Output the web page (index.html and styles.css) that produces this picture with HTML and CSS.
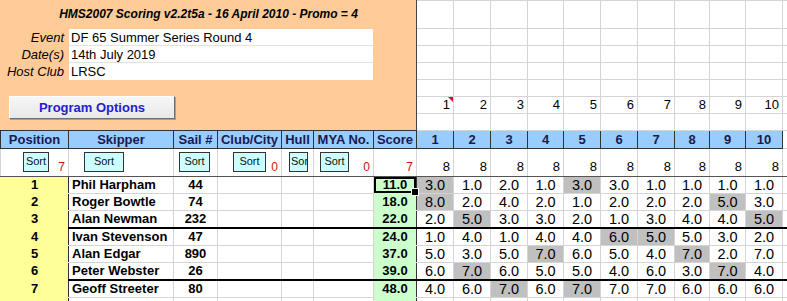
FILE: index.html
```html
<!DOCTYPE html>
<html lang="en">

<head>
  <meta charset="UTF-8">
  <meta name="viewport" content="width=device-width, initial-scale=1.0">
  <title>HMS2007 Scoring</title>
  <link rel="stylesheet" href="styles.css">
</head>

<body>
  <table class="sheet">
    <colgroup>
      <col class="col-pos">
      <col class="col-skipper">
      <col class="col-sail">
      <col class="col-club">
      <col class="col-hull">
      <col class="col-mya">
      <col class="col-score">
      <col class="col-race">
      <col class="col-race">
      <col class="col-race">
      <col class="col-race w36">
      <col class="col-race">
      <col class="col-race">
      <col class="col-race">
      <col class="col-race w35">
      <col class="col-race w36">
      <col class="col-race">
      <col class="col-race">
    </colgroup>

    <tr class="tall">
      <td class="panel" colspan="7" rowspan="7">
        <div class="panel-inner">
          <div class="title">HMS2007 Scoring v2.2t5a - 16 April 2010 - Promo = 4</div>
          <div class="event-info">
            <span class="label">Event</span>
            <span class="value">DF 65 Summer Series Round 4</span>
            <span class="label">Date(s)</span>
            <span class="value">14th July 2019</span>
            <span class="label">Host Club</span>
            <span class="value last">LRSC</span>
          </div>
          <button type="button" class="options-btn">Program Options</button>
        </div>
      </td>
      <td></td><td></td><td></td><td></td><td></td><td></td><td></td><td></td><td></td><td></td><td></td>
    </tr>
    <tr><td></td><td></td><td></td><td></td><td></td><td></td><td></td><td></td><td></td><td></td><td></td></tr>
    <tr><td></td><td></td><td></td><td></td><td></td><td></td><td></td><td></td><td></td><td></td><td></td></tr>
    <tr><td></td><td></td><td></td><td></td><td></td><td></td><td></td><td></td><td></td><td></td><td></td></tr>
    <tr><td></td><td></td><td></td><td></td><td></td><td></td><td></td><td></td><td></td><td></td><td></td></tr>
    <tr class="race-nos">
      <td class="note">1</td><td>2</td><td>3</td><td>4</td><td>5</td><td>6</td><td>7</td><td>8</td><td>9</td><td>10</td><td></td>
    </tr>
    <tr><td></td><td></td><td></td><td></td><td></td><td></td><td></td><td></td><td></td><td></td><td></td></tr>

    <tr class="head">
      <th>Position</th>
      <th>Skipper</th>
      <th>Sail #</th>
      <th>Club/City</th>
      <th>Hull</th>
      <th>MYA No.</th>
      <th class="score-head">Score</th>
      <th>1</th><th>2</th><th>3</th><th>4</th><th>5</th><th>6</th><th>7</th><th>8</th><th>9</th><th>10</th>
      <td></td>
    </tr>

    <tr class="sort-row">
      <td><div class="sort-wrap"><button type="button" class="sort-btn s-pos">Sort</button><span class="count">7</span></div></td>
      <td><div class="sort-wrap"><button type="button" class="sort-btn s-skipper">Sort</button></div></td>
      <td><div class="sort-wrap"><button type="button" class="sort-btn s-sail">Sort</button></div></td>
      <td><div class="sort-wrap"><button type="button" class="sort-btn s-club">Sort</button><span class="count">0</span></div></td>
      <td><div class="sort-wrap"><button type="button" class="sort-btn s-hull">Sor</button></div></td>
      <td><div class="sort-wrap"><button type="button" class="sort-btn s-mya">Sort</button><span class="count">0</span></div></td>
      <td><div class="sort-wrap"><span class="count">7</span></div></td>
      <td class="total">8</td><td class="total">8</td><td class="total">8</td><td class="total">8</td><td class="total">8</td>
      <td class="total">8</td><td class="total">8</td><td class="total">8</td><td class="total">8</td><td class="total">8</td>
      <td></td>
    </tr>

    <tr class="result">
      <td class="pos">1</td><td class="skipper">Phil Harpham</td><td class="sail">44</td><td></td><td></td><td></td>
      <td class="score active">11.0</td>
      <td class="drop">3.0</td><td>1.0</td><td>2.0</td><td>1.0</td><td class="drop">3.0</td>
      <td>3.0</td><td>1.0</td><td>1.0</td><td>1.0</td><td>1.0</td><td></td>
    </tr>
    <tr class="result">
      <td class="pos">2</td><td class="skipper">Roger Bowtle</td><td class="sail">74</td><td></td><td></td><td></td>
      <td class="score">18.0</td>
      <td class="drop">8.0</td><td>2.0</td><td>4.0</td><td>2.0</td><td>1.0</td>
      <td>2.0</td><td>2.0</td><td>2.0</td><td class="drop">5.0</td><td>3.0</td><td></td>
    </tr>
    <tr class="result">
      <td class="pos">3</td><td class="skipper">Alan Newman</td><td class="sail">232</td><td></td><td></td><td></td>
      <td class="score">22.0</td>
      <td>2.0</td><td class="drop">5.0</td><td>3.0</td><td>3.0</td><td>2.0</td>
      <td>1.0</td><td>3.0</td><td>4.0</td><td>4.0</td><td class="drop">5.0</td><td></td>
    </tr>
    <tr class="result split">
      <td class="pos">4</td><td class="skipper">Ivan Stevenson</td><td class="sail">47</td><td></td><td></td><td></td>
      <td class="score">24.0</td>
      <td>1.0</td><td>4.0</td><td>1.0</td><td>4.0</td><td>4.0</td>
      <td class="drop">6.0</td><td class="drop">5.0</td><td>5.0</td><td>3.0</td><td>2.0</td><td></td>
    </tr>
    <tr class="result">
      <td class="pos">5</td><td class="skipper">Alan Edgar</td><td class="sail">890</td><td></td><td></td><td></td>
      <td class="score">37.0</td>
      <td>5.0</td><td>3.0</td><td>5.0</td><td class="drop">7.0</td><td>6.0</td>
      <td>5.0</td><td>4.0</td><td class="drop">7.0</td><td>2.0</td><td>7.0</td><td></td>
    </tr>
    <tr class="result">
      <td class="pos">6</td><td class="skipper">Peter Webster</td><td class="sail">26</td><td></td><td></td><td></td>
      <td class="score">39.0</td>
      <td>6.0</td><td class="drop">7.0</td><td>6.0</td><td>5.0</td><td>5.0</td>
      <td>4.0</td><td>6.0</td><td>3.0</td><td class="drop">7.0</td><td>4.0</td><td></td>
    </tr>
    <tr class="result split">
      <td class="pos">7</td><td class="skipper">Geoff Streeter</td><td class="sail">80</td><td></td><td></td><td></td>
      <td class="score">48.0</td>
      <td>4.0</td><td>6.0</td><td class="drop">7.0</td><td>6.0</td><td class="drop">7.0</td>
      <td>7.0</td><td>7.0</td><td>6.0</td><td>6.0</td><td>6.0</td><td></td>
    </tr>
    <tr class="result">
      <td class="pos"></td><td class="skipper"></td><td class="sail"></td><td></td><td></td><td></td>
      <td class="score"></td>
      <td></td><td></td><td></td><td></td><td></td><td></td><td></td><td></td><td></td><td></td><td></td>
    </tr>
  </table>
</body>

</html>
```

FILE: styles.css
```css
* {
  box-sizing: border-box;
  margin: 0;
  padding: 0;
}

body {
  overflow: hidden;
  background: #FFF;
}

.sheet {
  width: 819px;
  table-layout: fixed;
  border-collapse: collapse;
  font-family: "Liberation Sans", Arial, sans-serif;
  font-size: 13px;
  color: #000;
}

.col-pos { width: 68px; }
.col-skipper { width: 105px; }
.col-sail { width: 44px; }
.col-club { width: 64px; }
.col-hull { width: 32px; }
.col-mya { width: 60px; }
.col-score { width: 43px; }
.col-race { width: 37px; }
.col-race.w36 { width: 36px; }
.col-race.w35 { width: 35px; }

.sheet td,
.sheet th {
  height: 17px;
  padding: 0 2px;
  border: 1px solid #D4D4D4;
  line-height: 16px;
  text-align: center;
  white-space: nowrap;
  overflow: hidden;
}

.sheet tr.tall > td {
  height: 28px;
}

/* orange header block */
.sheet td.panel {
  padding: 0;
  vertical-align: top;
  background: #FFCC99;
  border: 1px solid #FFCC99;
  border-right-color: #444;
  border-bottom-color: #333;
}

.panel-inner {
  display: flex;
  flex-direction: column;
  height: 129px;
}

.title {
  height: 28px;
  line-height: 27px;
  text-align: center;
  font-size: 12px;
  font-weight: bold;
  font-style: italic;
}

.event-info {
  display: grid;
  grid-template-columns: 68px 304px;
  grid-auto-rows: 17px;
}

.event-info .label {
  padding-right: 5px;
  text-align: right;
  font-style: italic;
  line-height: 17px;
}

.event-info .value {
  padding-left: 2px;
  background: #FFF;
  border-bottom: 1px solid #E2E2E2;
  line-height: 17px;
  text-align: left;
}

.event-info .value.last {
  border-bottom: 0;
}

.options-btn {
  width: 166px;
  height: 23px;
  margin: 16px 0 0 8px;
  border: 1px solid;
  border-color: #FFF #707070 #707070 #FFF;
  box-shadow: 1px 1px 0 #A0A0A0;
  background: linear-gradient(#F6F6F6, #E8E8E8);
  color: #2222CC;
  font-family: "Liberation Sans", Arial, sans-serif;
  font-size: 13px;
  font-weight: bold;
}

.race-nos td {
  text-align: right;
  padding-right: 3px;
}

.sheet td.note {
  position: relative;
}

.sheet td.note::after {
  content: '';
  position: absolute;
  top: 0;
  right: 0;
  border-left: 5px solid transparent;
  border-top: 5px solid #D0102A;
}

/* column heading row */
.head th {
  height: 18px;
  background: #99CCFF;
  border-color: #333;
  color: #1A1A4E;
  font-weight: bold;
}

.head td {
  border-top-color: #333;
}

/* sort buttons row */
.sort-row td {
  height: 28px;
  padding: 0 3px 0 0;
  vertical-align: bottom;
  border-bottom-color: #555;
}

.sort-wrap {
  display: flex;
  align-items: flex-end;
  height: 27px;
}

.sort-btn {
  height: 20px;
  margin-bottom: 4px;
  border: 1px solid #333;
  background: #CCFFFF;
  color: #111;
  font-family: "Liberation Sans", Arial, sans-serif;
  font-size: 11px;
  line-height: 14px;
  padding-bottom: 3px;
  overflow: hidden;
  white-space: nowrap;
}

.s-pos { width: 26px; margin-left: 22px; }
.s-skipper { width: 40px; margin-left: 15px; }
.s-sail { width: 31px; margin-left: 5px; }
.s-club { width: 33px; margin-left: 15px; }
.s-mya { width: 29px; margin-left: 6px; }

.s-hull {
  width: 19px;
  margin-left: 7px;
  padding-left: 1px;
  text-align: left;
}

.count {
  margin-left: auto;
  padding-bottom: 2px;
  color: #D01010;
  font-size: 12px;
  line-height: 14px;
}

.sort-row td.total {
  text-align: right;
  padding-bottom: 1px;
}

/* results */
.result td:nth-child(n+8) {
  font-size: 14.5px;
}

.sheet td.pos {
  background: #FFFF99;
  border-color: #FFFF99;
  border-right-color: #333;
  font-weight: bold;
}

.sheet td.skipper {
  padding-left: 3px;
  border-left-color: #333;
  text-align: left;
  font-weight: bold;
}

.sheet td.sail {
  font-weight: bold;
}

.sheet td.score {
  background: #CCFFCC;
  border-top-color: #CCFFCC;
  border-bottom-color: #CCFFCC;
  border-right-color: #333;
  font-weight: bold;
}

.sheet td.drop {
  background: #C0C0C0;
}

.sheet tr.split td:not(.pos) {
  border-top: 2px solid #000;
}

.sheet td.active {
  position: relative;
  overflow: visible;
  box-shadow: inset 0 0 0 2px #000;
}

.sheet td.active::after {
  content: '';
  position: absolute;
  right: -3px;
  bottom: -3px;
  z-index: 2;
  width: 6px;
  height: 6px;
  background: #000;
  border: 1px solid #FFF;
}
```
